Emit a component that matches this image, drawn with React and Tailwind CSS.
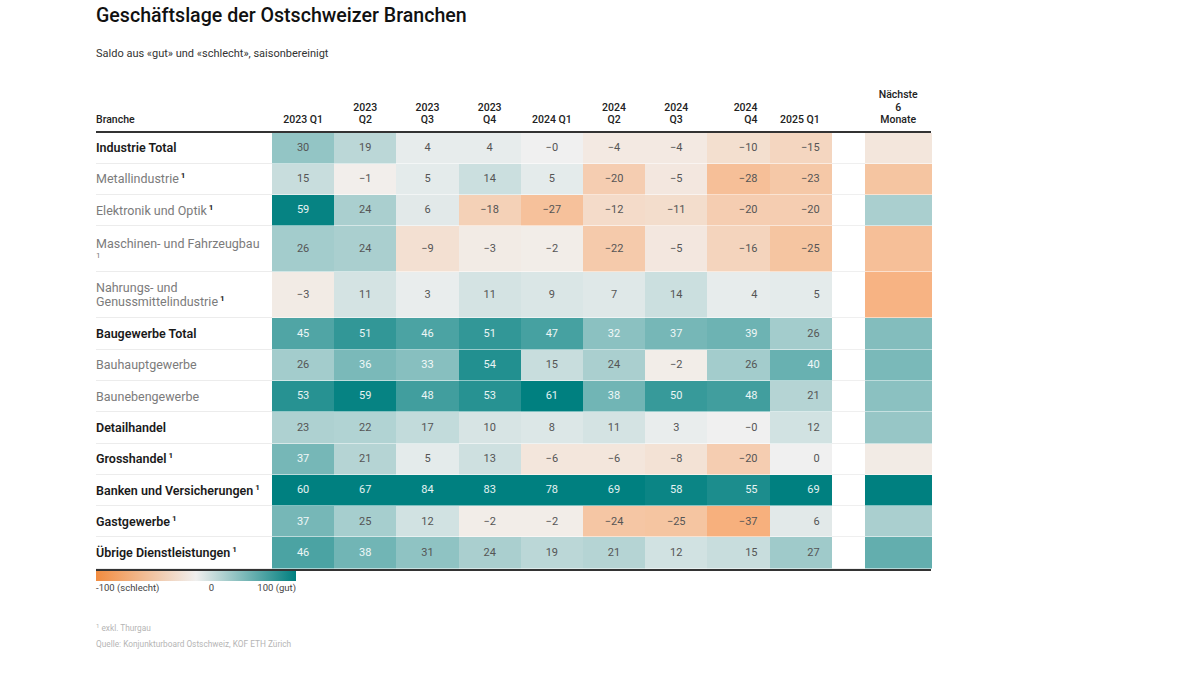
const rows = [
  { label: 'Industrie Total', bold: true, v: ['30', '19', '4', '4', '−0', '−4', '−4', '−10', '−15'], next: -6 },
  { label: 'Metallindustrie', sup: true, v: ['15', '−1', '5', '14', '5', '−20', '−5', '−28', '−23'], next: -25 },
  { label: 'Elektronik und Optik', sup: true, v: ['59', '24', '6', '−18', '−27', '−12', '−11', '−20', '−20'], next: 24 },
  { label: 'Maschinen- und Fahrzeugbau', supLine: true, tall: true, v: ['26', '24', '−9', '−3', '−2', '−22', '−5', '−16', '−25'], next: -28 },
  { label: 'Nahrungs- und', label2: 'Genussmittelindustrie', sup: true, tall: true, v: ['−3', '11', '3', '11', '9', '7', '14', '4', '5'], next: -35 },
  { label: 'Baugewerbe Total', bold: true, v: ['45', '51', '46', '51', '47', '32', '37', '39', '26'], next: 34 },
  { label: 'Bauhauptgewerbe', v: ['26', '36', '33', '54', '15', '24', '−2', '26', '40'], next: 36 },
  { label: 'Baunebengewerbe', v: ['53', '59', '48', '53', '61', '38', '50', '48', '21'], next: 32 },
  { label: 'Detailhandel', bold: true, v: ['23', '22', '17', '10', '8', '11', '3', '−0', '12'], next: 29 },
  { label: 'Grosshandel', bold: true, sup: true, v: ['37', '21', '5', '13', '−6', '−6', '−8', '−20', '0'], next: -3 },
  { label: 'Banken und Versicherungen', bold: true, sup: true, v: ['60', '67', '84', '83', '78', '69', '58', '55', '69'], next: 80 },
  { label: 'Gastgewerbe', bold: true, sup: true, v: ['37', '25', '12', '−2', '−2', '−24', '−25', '−37', '6'], next: 24 },
  { label: 'Übrige Dienstleistungen', bold: true, sup: true, v: ['46', '38', '31', '24', '19', '21', '12', '15', '27'], next: 41 },
]

// header: [lines, align]
const heads = [
  [['2023 Q1'], 'center'],
  [['2023', 'Q2'], 'center'],
  [['2023', 'Q3'], 'center'],
  [['2023', 'Q4'], 'center'],
  [['2024 Q1'], 'center'],
  [['2024', 'Q2'], 'center'],
  [['2024', 'Q3'], 'center'],
  [['2024', 'Q4'], 'right'],
  [['2025 Q1'], 'right'],
]

const toNum = (s) => Number(s.replace('−', '-'))

function cellColor(v) {
  const base = [240, 240, 240]
  let end, t
  if (v >= 0) {
    const x = Math.min(1, v / 60)
    t = Math.min(1, 0.55 * x + 0.45 * x * x)
    end = [0, 128, 128]
  } else {
    t = Math.min(1, -v / 60)
    end = [250, 136, 54]
    base[0] = 242
    base[2] = 238
  }
  const c = base.map((b, i) => Math.round(b + (end[i] - b) * t))
  return `rgb(${c[0]},${c[1]},${c[2]})`
}

const gridCols = 'grid grid-cols-[176px_repeat(9,62.2px)_33px_67px]'

function Sup() {
  return <sup className="text-[8px] font-bold text-[#222] ml-[2px] -top-[5px]">1</sup>
}

function Row({ row }) {
  const h = row.tall ? 'h-[46px]' : 'h-[31.3px]'
  return (
    <div className={`${gridCols} ${h}`}>
      <div
        className={`flex flex-col justify-center pt-[1px] border-b border-[#ececec] leading-[14px] text-[12.5px] ${
          row.bold ? 'font-semibold text-[#1a1a1a]' : 'text-[#7b7b7b]'
        }`}
      >
        <div>
          {row.label}
          {row.sup && !row.label2 && <Sup />}
        </div>
        {row.label2 && (
          <div>
            {row.label2}
            <Sup />
          </div>
        )}
        {row.supLine && <div className="text-[8px] leading-[10px] text-[#7b7b7b]">1</div>}
      </div>
      {row.v.map((s, i) => {
        const n = toNum(s)
        const light = n >= 32
        return (
          <div
            key={i}
            className={`flex items-center pt-[1px] border-b border-white/50 text-[11px] ${
              i >= 7 ? 'justify-end pr-[12px]' : 'justify-center'
            } ${light ? 'text-white/90' : 'text-[#555]'}`}
            style={{ backgroundColor: cellColor(n) }}
          >
            {s}
          </div>
        )
      })}
      <div className="border-b border-[#efefef]" />
      <div className="border-b border-white/50" style={{ backgroundColor: cellColor(row.next) }} />
    </div>
  )
}

export default function App() {
  return (
    <div className="w-[1200px] h-[675px] bg-white pl-[96px] pt-[5px] font-['Roboto',sans-serif] text-[#222]">
      <h1 className="text-[19.6px] leading-[22px] font-medium text-[#111]">Geschäftslage der Ostschweizer Branchen</h1>
      <p className="mt-[20px] text-[11px] leading-[14px] text-[#333]">Saldo aus «gut» und «schlecht», saisonbereinigt</p>

      <div className="mt-[28px] w-[835px]">
        <div className={`${gridCols} items-end pb-[4px] border-b-2 border-[#333] text-[10.5px] leading-[12.5px] font-medium text-[#222]`}>
          <div>Branche</div>
          {heads.map(([lines, align], i) => (
            <div key={i} className={align === 'right' ? 'text-right pr-[12px]' : 'text-center'}>
              {lines.map((l) => (
                <div key={l}>{l}</div>
              ))}
            </div>
          ))}
          <div />
          <div className="text-center">
            <div>Nächste</div>
            <div>6</div>
            <div>Monate</div>
          </div>
        </div>

        <div className="border-b-2 border-[#333]">
          {rows.map((r) => (
            <Row key={r.label} row={r} />
          ))}
        </div>
      </div>

      <div className="w-[200px]">
        <div className="h-[10px] bg-[linear-gradient(to_right,#f28c40,#f0efee_50%,#007f7f)]" />
        <div className="flex justify-between mt-[1px] text-[9.5px] leading-[12px] text-[#444]">
          <span>-100 (schlecht)</span>
          <span className="pl-[6px]">0</span>
          <span>100 (gut)</span>
        </div>
      </div>

      <div className="mt-[26px] text-[8.3px] leading-[16px] text-[#b5b5b5]">
        <div>
          <sup className="text-[6px] -top-[3px]">1</sup> exkl. Thurgau
        </div>
        <div>Quelle: Konjunkturboard Ostschweiz, KOF ETH Zürich</div>
      </div>
    </div>
  )
}
